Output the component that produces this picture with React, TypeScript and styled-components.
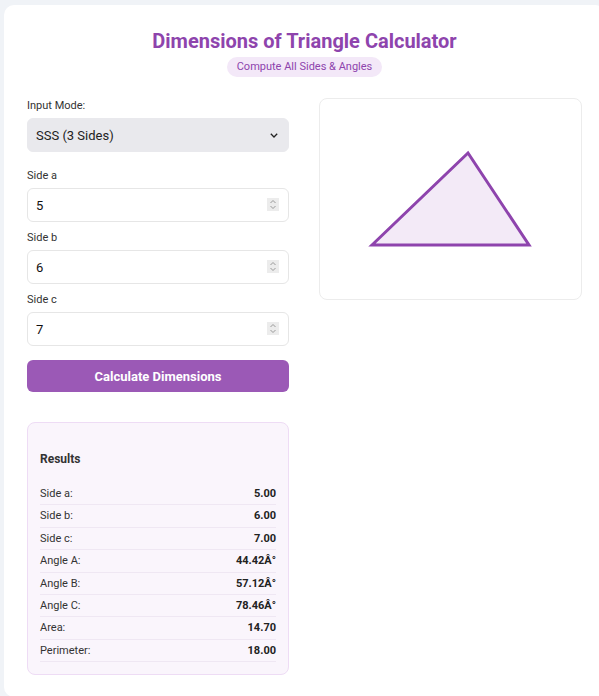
import { useState } from 'react';
import styled, { createGlobalStyle } from 'styled-components';

const GlobalStyle = createGlobalStyle`
  html, body {
    margin: 0;
    padding: 0;
    background: #f0f3f7;
    font-family: Roboto, "Noto Sans", sans-serif;
    color: #333;
  }
`;

const results: [string, string][] = [
  ['Side a:', '5.00'],
  ['Side b:', '6.00'],
  ['Side c:', '7.00'],
  ['Angle A:', '44.42Â°'],
  ['Angle B:', '57.12Â°'],
  ['Angle C:', '78.46Â°'],
  ['Area:', '14.70'],
  ['Perimeter:', '18.00'],
];

const Spinner = () => (
  <SpinBox>
    <svg width="8" height="11" viewBox="0 0 8 11">
      <path d="M1.5 4 L4 1.5 L6.5 4 M1.5 7 L4 9.5 L6.5 7" fill="none" stroke="#9a9a9a" strokeWidth="1" />
    </svg>
  </SpinBox>
);

const NumberField = ({ label, value, onChange }: { label: string; value: string; onChange: (v: string) => void }) => (
  <Field>
    <Label>{label}</Label>
    <InputWrap>
      <Input type="number" value={value} onChange={e => onChange(e.target.value)} />
      <Spinner />
    </InputWrap>
  </Field>
);

const App = () => {
  const [a, setA] = useState('5');
  const [b, setB] = useState('6');
  const [c, setC] = useState('7');

  return (
    <>
      <GlobalStyle />
      <Page>
        <Card>
          <Header>
            <Title>Dimensions of Triangle Calculator</Title>
            <Badge>Compute All Sides &amp; Angles</Badge>
          </Header>
          <Columns>
            <FormCol>
              <Field>
                <Label>Input Mode:</Label>
                <InputWrap>
                  <Select defaultValue="sss">
                    <option value="sss">SSS (3 Sides)</option>
                    <option value="sas">SAS (2 Sides, 1 Angle)</option>
                    <option value="asa">ASA (2 Angles, 1 Side)</option>
                  </Select>
                  <Chevron width="8" height="5" viewBox="0 0 8 5">
                    <path d="M0.8 0.8 L4 4 L7.2 0.8" fill="none" stroke="#222" strokeWidth="1.3" />
                  </Chevron>
                </InputWrap>
              </Field>
              <NumberField label="Side a" value={a} onChange={setA} />
              <NumberField label="Side b" value={b} onChange={setB} />
              <NumberField label="Side c" value={c} onChange={setC} />
              <Button>Calculate Dimensions</Button>

              <ResultsBox>
                <ResultsTitle>Results</ResultsTitle>
                {results.map(([k, v]) => (
                  <ResultRow key={k}>
                    <span>{k}</span>
                    <strong>{v}</strong>
                  </ResultRow>
                ))}
              </ResultsBox>
            </FormCol>

            <Preview>
              <svg width="263" height="200" viewBox="0 0 263 200">
                <polygon
                  points="52,146 148,54 209,146"
                  fill="#f3eaf7"
                  stroke="#8e44ad"
                  strokeWidth="3"
                />
              </svg>
            </Preview>
          </Columns>
        </Card>
      </Page>
    </>
  );
};

const Page = styled.div`
  padding: 5px 0 0 4px;
  width: 601px;
`;

const Card = styled.div`
  background: #fff;
  border-radius: 10px;
  padding: 22px 23px 22px;
  width: 601px;
  box-sizing: border-box;
`;

const Header = styled.div`
  display: flex;
  flex-direction: column;
  align-items: center;
  margin-bottom: 21px;
`;

const Title = styled.h1`
  margin: 0 0 2px;
  font-size: 20px;
  line-height: 28px;
  font-weight: 700;
  color: #8e44ad;
`;

const Badge = styled.span`
  display: inline-block;
  background: #f3e8f8;
  color: #8e44ad;
  font-size: 11px;
  line-height: 20px;
  padding: 0 10px;
  border-radius: 10px;
`;

const Columns = styled.div`
  display: grid;
  grid-template-columns: 262px 263px;
  gap: 30px;
  align-items: start;
`;

const FormCol = styled.div`
  display: flex;
  flex-direction: column;
`;

const Field = styled.div`
  display: flex;
  flex-direction: column;
  margin-bottom: 8px;
`;

const Label = styled.label`
  font-size: 11px;
  line-height: 15px;
  margin-bottom: 5px;
  color: #333;
`;

const Select = styled.select`
  display: block;
  width: 100%;
  height: 34px;
  appearance: none;
  background-color: #e9e9ed;
  border: 1px solid #e9e9ed;
  border-radius: 6px;
  padding: 0 8px;
  font-family: inherit;
  font-size: 13px;
  color: #222;
  margin-bottom: 8px;
`;

const Chevron = styled.svg`
  position: absolute;
  right: 11px;
  top: 15px;
  pointer-events: none;
`;

const InputWrap = styled.div`
  position: relative;
`;

const Input = styled.input`
  display: block;
  width: 100%;
  height: 34px;
  box-sizing: border-box;
  border: 1px solid #e6e6e6;
  border-radius: 6px;
  padding: 0 8px;
  font-family: inherit;
  font-size: 13px;
  color: #111;
  background: #fff;
  -moz-appearance: textfield;

  &::-webkit-inner-spin-button,
  &::-webkit-outer-spin-button {
    -webkit-appearance: none;
    margin: 0;
  }

  &:focus {
    outline: none;
  }
`;

const SpinBox = styled.span`
  position: absolute;
  right: 10px;
  top: 10px;
  width: 12px;
  height: 13px;
  background: #ececec;
  display: flex;
  align-items: center;
  justify-content: center;
  pointer-events: none;
`;

const Button = styled.button`
  margin-top: 6px;
  height: 32px;
  border: none;
  border-radius: 6px;
  background: #9b59b6;
  color: #fff;
  font-family: inherit;
  font-size: 13px;
  font-weight: 700;
  cursor: pointer;
`;

const ResultsBox = styled.div`
  margin-top: 30px;
  background: #faf5fc;
  border: 1px solid #eedcf5;
  border-radius: 8px;
  padding: 24px 12px 12px;
`;

const ResultsTitle = styled.h3`
  margin: 0 0 12px;
  font-size: 12px;
  line-height: 24px;
  font-weight: 700;
  color: #333;
`;

const ResultRow = styled.div`
  display: flex;
  justify-content: space-between;
  font-size: 11px;
  line-height: 21.4px;
  border-bottom: 1px solid #efe7f3;
  color: #333;

  strong {
    font-weight: 700;
    color: #222;
  }
`;

const Preview = styled.div`
  height: 200px;
  border: 1px solid #ececec;
  border-radius: 8px;
  overflow: hidden;

  svg {
    display: block;
  }
`;

export default App;
